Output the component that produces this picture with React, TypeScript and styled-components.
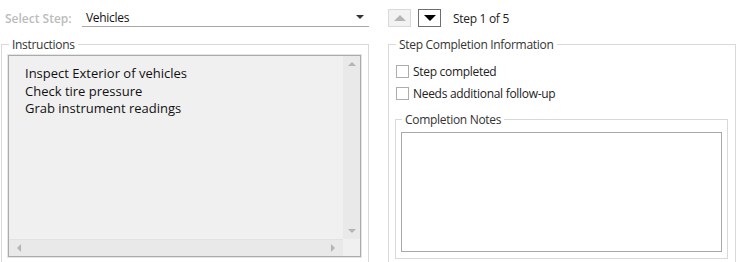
import styled, { createGlobalStyle } from "styled-components";

const GlobalStyle = createGlobalStyle`
  html, body {
    margin: 0;
    padding: 0;
    background: #ffffff;
    overflow: hidden;
  }
  body {
    font-family: "Open Sans", "Noto Sans", sans-serif;
    color: #222;
  }
`;

const Page = styled.div`
  width: 739px;
  height: 268px;
  display: grid;
  grid-template-columns: 368px 348px;
  column-gap: 19px;
  padding-left: 1px;
  box-sizing: border-box;
`;

const Column = styled.div`
  display: flex;
  flex-direction: column;
`;

const TopRow = styled.div`
  height: 37px;
  display: flex;
  align-items: flex-start;
  padding-top: 8px;
  box-sizing: border-box;
`;

const StepLabel = styled.span`
  font-size: 12px;
  font-weight: 600;
  color: #bcbcbc;
  width: 77px;
  padding-left: 4px;
  padding-top: 2px;
`;

const Combo = styled.div`
  flex: 1;
  height: 18px;
  border-bottom: 1px solid #a8a8a8;
  display: flex;
  align-items: center;
  justify-content: space-between;
  padding: 0 5px 0 4px;
  font-size: 12px;
  letter-spacing: -0.3px;
  color: #111;
`;

const ComboArrow = styled.span`
  width: 0;
  height: 0;
  border-left: 4px solid transparent;
  border-right: 4px solid transparent;
  border-top: 4px solid #333;
`;

const NavButton = styled.div<{ $disabled?: boolean }>`
  width: 23px;
  height: 18px;
  box-sizing: border-box;
  border: 1px solid ${(p) => (p.$disabled ? "#d9d9d9" : "#6e6e6e")};
  background: ${(p) => (p.$disabled ? "#f2f2f2" : "#ffffff")};
  display: flex;
  align-items: center;
  justify-content: center;
  margin-right: 7px;
  margin-top: 1px;
`;

const Triangle = styled.span<{ $up?: boolean; $color: string }>`
  width: 0;
  height: 0;
  border-left: 6px solid transparent;
  border-right: 6px solid transparent;
  ${(p) =>
    p.$up
      ? `border-bottom: 6px solid ${p.$color};`
      : `border-top: 6px solid ${p.$color};`}
`;

const StepCount = styled.span`
  font-size: 12px;
  letter-spacing: -0.3px;
  color: #222;
  margin-left: 5px;
  padding-top: 2px;
`;

const Group = styled.fieldset`
  margin: 0;
  padding: 3px 7px 0 6px;
  border: 1px solid #d9d9d9;
  min-width: 0;
  flex: 1;
  display: flex;
  flex-direction: column;
`;

const Legend = styled.legend`
  font-size: 12px;
  letter-spacing: -0.3px;
  color: #333;
  padding: 0 3px;
  margin-left: 1px;
  line-height: 15px;
`;

const TextArea = styled.div<{ $bg: string }>`
  flex: 1;
  border: 1px solid #ababab;
  box-shadow: 0 0 0 1px #e6e6e6;
  background: ${(p) => p.$bg};
  display: grid;
  grid-template-columns: 1fr 17px;
  grid-template-rows: 1fr 17px;
  margin-bottom: 10px;
`;

const Content = styled.div`
  padding: 9px 16px 5px;
  font-size: 13px;
  line-height: 17.5px;
  color: #111;
`;

const VScroll = styled.div`
  background: #e9e9e9;
  display: flex;
  flex-direction: column;
  justify-content: space-between;
  align-items: center;
  padding: 6px 0;
`;

const HScroll = styled.div`
  background: #e9e9e9;
  display: flex;
  justify-content: space-between;
  align-items: center;
  padding: 0 8px;
  border-top: 1px solid #e2e2e2;
`;

const Corner = styled.div`
  background: #f0f0f0;
`;

const SmallArrow = styled.span<{ $dir: "up" | "down" | "left" | "right" }>`
  width: 0;
  height: 0;
  ${(p) =>
    p.$dir === "up"
      ? "border-left: 4px solid transparent; border-right: 4px solid transparent; border-bottom: 4px solid #b4b4b4;"
      : p.$dir === "down"
      ? "border-left: 4px solid transparent; border-right: 4px solid transparent; border-top: 4px solid #b4b4b4;"
      : p.$dir === "left"
      ? "border-top: 4px solid transparent; border-bottom: 4px solid transparent; border-right: 4px solid #b4b4b4;"
      : "border-top: 4px solid transparent; border-bottom: 4px solid transparent; border-left: 4px solid #b4b4b4;"}
`;

const CheckRow = styled.label`
  display: flex;
  align-items: center;
  gap: 4px;
  font-size: 12px;
  letter-spacing: -0.3px;
  color: #222;
  height: 22px;
`;

const CheckBox = styled.span`
  width: 13px;
  height: 13px;
  box-sizing: border-box;
  border: 1px solid #adadad;
  background: #fff;
  margin-left: 1px;
`;

const Checks = styled.div`
  display: flex;
  flex-direction: column;
  padding-top: 5px;
  margin-bottom: 8px;
`;

const NotesGroup = styled(Group)`
  padding: 5px 5px 0 5px;
  margin-bottom: 8px;
`;

const NotesBox = styled.div`
  flex: 1;
  border: 1px solid #a9a9a9;
  background: #fff;
  margin-bottom: 6px;
`;

function ScrollBox({ lines }: { lines: string[] }) {
  return (
    <TextArea $bg="#f0f0f0">
      <Content>
        {lines.map((l) => (
          <div key={l}>{l}</div>
        ))}
      </Content>
      <VScroll>
        <SmallArrow $dir="up" />
        <SmallArrow $dir="down" />
      </VScroll>
      <HScroll>
        <SmallArrow $dir="left" />
        <SmallArrow $dir="right" />
      </HScroll>
      <Corner />
    </TextArea>
  );
}

export default function App() {
  return (
    <>
      <GlobalStyle />
      <Page>
        <Column>
          <TopRow>
            <StepLabel>Select Step:</StepLabel>
            <Combo>
              <span>Vehicles</span>
              <ComboArrow />
            </Combo>
          </TopRow>
          <Group>
            <Legend>Instructions</Legend>
            <ScrollBox
              lines={[
                "Inspect Exterior of vehicles",
                "Check tire pressure",
                "Grab instrument readings",
              ]}
            />
          </Group>
        </Column>
        <Column>
          <TopRow>
            <NavButton $disabled>
              <Triangle $up $color="#b5b5b5" />
            </NavButton>
            <NavButton>
              <Triangle $color="#000" />
            </NavButton>
            <StepCount>Step 1 of 5</StepCount>
          </TopRow>
          <Group>
            <Legend>Step Completion Information</Legend>
            <Checks>
              <CheckRow>
                <CheckBox />
                Step completed
              </CheckRow>
              <CheckRow>
                <CheckBox />
                Needs additional follow-up
              </CheckRow>
            </Checks>
            <NotesGroup>
              <Legend>Completion Notes</Legend>
              <NotesBox />
            </NotesGroup>
          </Group>
        </Column>
      </Page>
    </>
  );
}
